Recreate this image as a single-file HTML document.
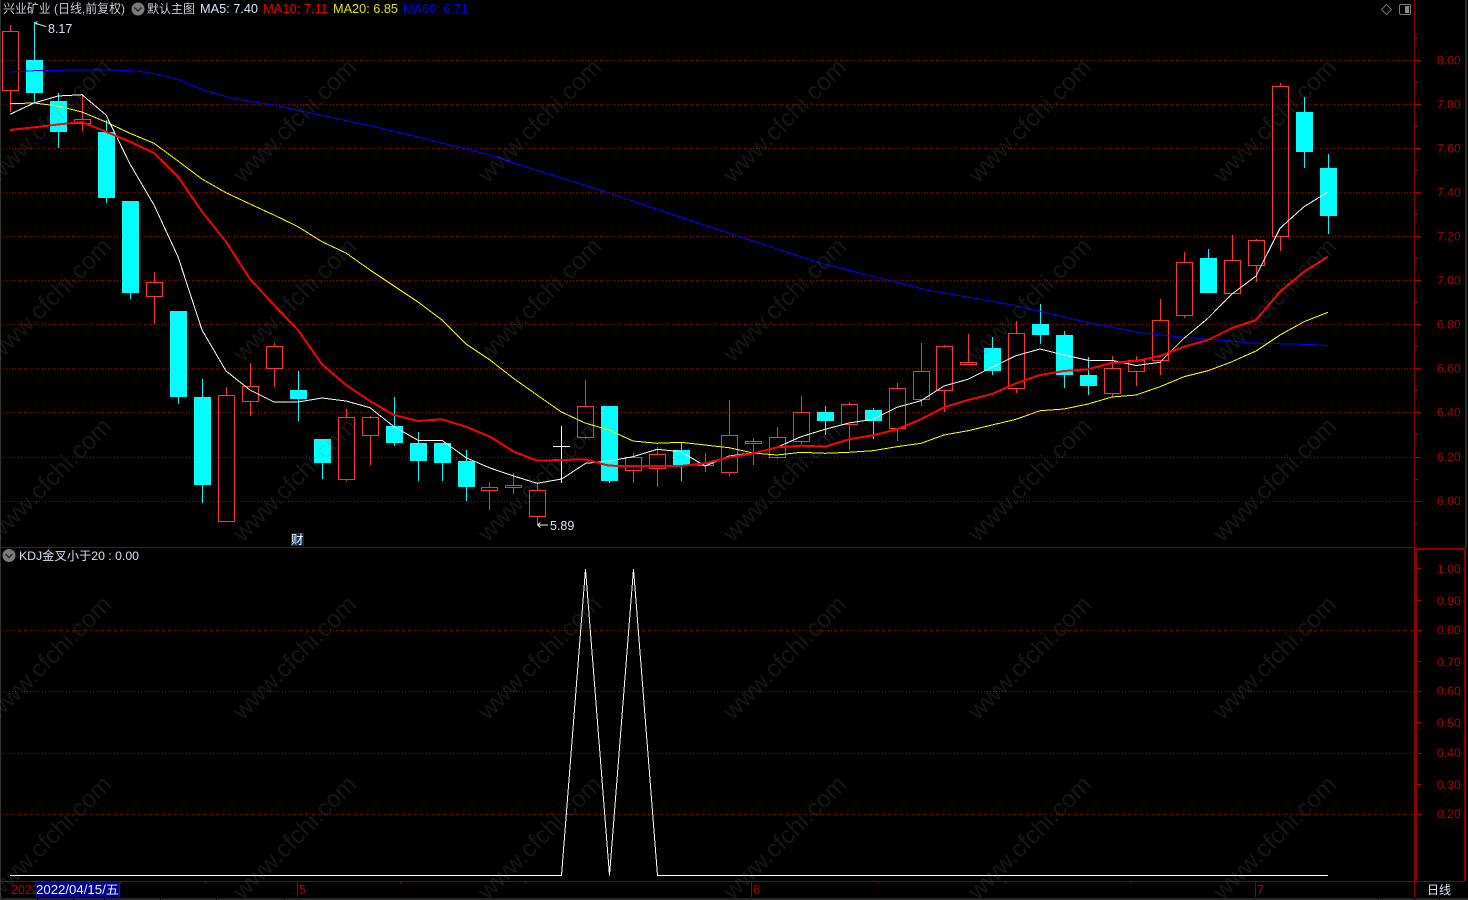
<!DOCTYPE html>
<html><head><meta charset="utf-8"><title>KDJ</title>
<style>
html,body{margin:0;padding:0;background:#000;width:1468px;height:900px;overflow:hidden}
svg{display:block;position:absolute;left:0;top:0}
text{font-family:"Liberation Sans","Noto Sans CJK SC",sans-serif}
.ax{fill:#a80000;font-size:12.2px}
.wm{fill:rgba(125,125,125,.17);font-size:24.6px;text-anchor:middle}
.g{stroke:#9a0000;stroke-width:1;stroke-dasharray:1 2;fill:none}
</style></head><body>
<svg width="1468" height="900" viewBox="0 0 1468 900" xmlns="http://www.w3.org/2000/svg">
<rect width="1468" height="900" fill="#000"/>

<!-- grid -->
<g shape-rendering="crispEdges">
<path class="g" d="M3 60.5H1414M3 104.5H1414M3 148.5H1414M3 192.5H1414M3 236.5H1414M3 280.5H1414M3 324.5H1414M3 368.5H1414M3 412.5H1414M3 457.5H1414M3 501.5H1414M3 630.5H1414M3 691.5H1414M3 753.5H1414M3 814.5H1414"/>
<!-- frames -->
<rect x="0" y="0" width="1" height="898" fill="#333"/>
<rect x="1465" y="0" width="2" height="548" fill="#2a2a2a"/>
<path d="M1 547.5H1415M1414.5 0V898M1 881.5H1465" stroke="#8c0000" fill="none"/>
<path d="M1416 549V881M1415 549H1466M1465 549V881" stroke="#8c0000" stroke-width="2" fill="none"/>
<path d="M297.5 882V897M751.5 882V897M1255.5 882V897M525.5 882V884M120.5 882V884M205.5 882V884M400.5 882V884M878.5 882V884M1005.5 882V884M1130.5 882V884" stroke="#8c0000" fill="none"/>
<!-- ticks -->
<path d="M1415 60.5h6M1415 104.5h6M1415 148.5h6M1415 192.5h6M1415 236.5h6M1415 280.5h6M1415 324.5h6M1415 368.5h6M1415 412.5h6M1415 457.5h6M1415 501.5h6M1415 82.5h3M1415 126.5h3M1415 170.5h3M1415 214.5h3M1415 258.5h3M1415 302.5h3M1415 346.5h3M1415 390.5h3M1415 434.5h3M1415 479.5h3M1415 523.5h3M1415 82.5h3M1415 38.5h3M1417 568.5h4M1417 600.5h4M1417 630.5h4M1417 661.5h4M1417 691.5h4M1417 722.5h4M1417 753.5h4M1417 784.5h4M1417 814.5h4" stroke="#a80000" fill="none"/>
<!-- bottom strip -->
<rect x="0" y="898" width="1468" height="2" fill="#262626"/>
<path d="M37.5 898v2M73.5 898v2M104.5 898v2M160.5 898v2M216.5 898v2M284.5 898v2M1378.5 898v2M1414.5 898v2M1439.5 898v2" stroke="#000"/>
</g>

<!-- red candles -->
<path shape-rendering="crispEdges" fill="none" stroke="#ff3333" stroke-width="1" d="
M10.5 25V31M10.5 91V112M2.5 31.5h16V90.5h-16z
M82.5 95V119M82.5 124V131M74.5 119.5h16V123.5h-16z
M154.5 272V282M154.5 297V324M146.5 282.5h16V296.5h-16z
M226.5 387V395M218.5 395.5h16V521.5h-16z
M250.5 363V386M250.5 402V416M242.5 386.5h16V401.5h-16z
M274.5 343V346M274.5 369V387M266.5 346.5h16V368.5h-16z
M346.5 409V417M346.5 480V481M338.5 417.5h16V479.5h-16z
M370.5 416V417M370.5 436V465M362.5 417.5h16V435.5h-16z
M489.5 482V487M489.5 491V510M481.5 487.5h16V490.5h-16z
M513.5 473V485M513.5 488V494M505.5 485.5h16V487.5h-16z
M537.5 483V490M537.5 517V525M529.5 490.5h16V516.5h-16z
M585.5 380V406M585.5 438V439M577.5 406.5h16V437.5h-16z
M633.5 453V457M633.5 471V483M625.5 457.5h16V470.5h-16z
M657.5 447V454M657.5 469V487M649.5 454.5h16V468.5h-16z
M705.5 453V463M705.5 466V472M697.5 463.5h16V465.5h-16z
M729.5 400V435M729.5 473V476M721.5 435.5h16V472.5h-16z
M753.5 438V441M753.5 444V465M745.5 441.5h16V443.5h-16z
M777.5 427V437M777.5 458V459M769.5 437.5h16V457.5h-16z
M801.5 396V412M801.5 442V444M793.5 412.5h16V441.5h-16z
M849.5 402V404M849.5 425V450M841.5 404.5h16V424.5h-16z
M897.5 383V388M897.5 429V441M889.5 388.5h16V428.5h-16z
M921.5 343V371M921.5 400V406M913.5 371.5h16V399.5h-16z
M944.5 345V346M944.5 391V412M936.5 346.5h16V390.5h-16z
M968.5 334V362M960.5 362.5h16V364.5h-16z
M1016.5 321V333M1016.5 389V393M1008.5 333.5h16V388.5h-16z
M1112.5 356V368M1112.5 394V397M1104.5 368.5h16V393.5h-16z
M1136.5 356V360M1136.5 372V386M1128.5 360.5h16V371.5h-16z
M1160.5 299V320M1160.5 361V375M1152.5 320.5h16V360.5h-16z
M1184.5 252V262M1184.5 316V318M1176.5 262.5h16V315.5h-16z
M1232.5 235V260M1224.5 260.5h16V293.5h-16z
M1256.5 239V240M1256.5 266V282M1248.5 240.5h16V265.5h-16z
M1280.5 83V86M1280.5 237V251M1272.5 86.5h16V236.5h-16z"/>

<!-- cyan candles -->
<path shape-rendering="crispEdges" fill="#00ffff" d="
M34 22h1v81h-1zM26 60h17v33h-17z
M58 93h1v55h-1zM50 101h17v31h-17z
M106 120h1v83h-1zM98 132h17v66h-17z
M130 201h1v98h-1zM122 201h17v92h-17z
M178 311h1v93h-1zM170 311h17v86h-17z
M202 379h1v124h-1zM194 397h17v88h-17z
M298 371h1v50h-1zM290 390h17v9h-17z
M322 439h1v40h-1zM314 439h17v24h-17z
M394 397h1v49h-1zM386 426h17v17h-17z
M418 432h1v49h-1zM410 443h17v18h-17z
M442 443h1v38h-1zM434 443h17v20h-17z
M466 450h1v51h-1zM458 461h17v26h-17z
M609 406h1v77h-1zM601 406h17v75h-17z
M681 443h1v38h-1zM673 450h17v16h-17z
M825 406h1v29h-1zM817 412h17v9h-17z
M873 408h1v31h-1zM865 410h17v11h-17z
M992 337h1v38h-1zM984 348h17v23h-17z
M1040 304h1v40h-1zM1032 324h17v11h-17z
M1064 331h1v57h-1zM1056 335h17v40h-17z
M1088 357h1v38h-1zM1080 375h17v11h-17z
M1208 249h1v44h-1zM1200 258h17v35h-17z
M1304 97h1v71h-1zM1296 112h17v40h-17z
M1328 154h1v80h-1zM1320 168h17v48h-17z"/>

<!-- doji -->
<path shape-rendering="crispEdges" d="M561.5 426V483M553 446.5H570" stroke="#fff" fill="none"/>

<g shape-rendering="crispEdges" fill="none">
<!-- MA60 -->
<polyline stroke="#0000ff" stroke-width="1" points="10,72 34,70.7 58,70.3 82,70 113,70 137,71 157,74 177,79 203,90 233,98.3 277,105.7 320,115 367,125 410,135 457,146.7 490,155 520,165 600,190 680,217 750,240 820,263 927,290 1013,305 1090,323 1140,332.7 1180,337 1220,340 1250,343 1310,344.5 1328,345.5"/>
<!-- MA20 -->
<polyline stroke="#ffff00" stroke-width="1" points="10,103.7 34,103 58,106 82,112 106,122 130,133.3 154,143.3 178,161 202,179 226,192.7 250,204 274,215 298,226.7 322,241.7 346,253 370,270 394,286 418,302 442,320 466,344 490,360 513,378 537,395 561,411.7 585,423 609,430 633,441 657,443.3 681,442.3 705,445 729,447.7 753,453 777,455 801,452.3 825,453.3 849,452.3 873,450.7 897,446.7 921,443.3 944,435 968,430.7 992,425 1016,419.3 1040,410.7 1064,409 1088,404 1112,397 1136,395 1160,386.7 1184,376.7 1208,370.7 1232,361.7 1256,351 1280,335 1304,321.7 1328,312.3"/>
<!-- MA5 -->
<polyline stroke="#ffffff" stroke-width="1" points="10,114.3 34,103 58,96 82,94.7 106,115 130,164 154,205 178,256.7 202,330 226,371 250,390 274,402 298,402 322,398 346,401 370,407.7 394,426.7 418,440.3 442,440.3 466,457.7 490,468 513.7,476 537,483.3 561.7,479 585.7,463.3 609.3,461 633,456.7 657.3,449.3 681,451.7 705,466 729,456 753.7,452.7 777,447.3 801,436.7 825,429.3 849,423 873,419.3 897,407.3 921,400.7 944,386 968,379.3 992,367.3 1016,355.7 1040,349 1064,355 1088,360.3 1112,360.3 1136,365.5 1160,362.3 1184,338.3 1208,318.3 1232,294 1256,276 1280,228.3 1304,206.7 1328,192"/>
<!-- MA10 -->
<polyline stroke="#ff0000" stroke-width="2" points="10,130 34,127.3 58,124.5 82,122 106,131.7 130,141.7 154,153 178,176.7 202,211.7 226,241.7 250,279 274,305 298,330 322,364.3 346,385 370,401 394,415 418,421 442,419.3 466,426.7 490,436.7 514,451.7 537,460.7 561,460 585,459.3 609,465.7 633,466 657,466 681,466 705,463.3 729,457.3 753.7,453.3 777,447.3 801,445.7 825,446.7 849,439.3 873,435.3 897,429.3 921,419.3 944,407.3 968,400 992,394 1016,383.3 1040,375 1064,371 1088,369.3 1112,362.7 1136,361 1160,356 1184,346.7 1208,340 1232,328 1256,320 1280,291.7 1304,271.7 1328,256.7"/>
<!-- KDJ -->
<polyline stroke="#ffffff" stroke-width="1" points="10,875.5 561.5,875.5 585.5,569 609.5,875.5 633.5,569 657.5,875.5 1328,875.5"/>
</g>

<!-- markers -->
<path d="M35 23L46 26.7M35 23l2.5-1.5M35 23l2.5 1.5" stroke="#e8e8e8" stroke-width="1" fill="none"/>
<text x="48" y="33" font-size="12.5" fill="#d4e4f0">8.17</text>
<path d="M537.5 525H548M537.5 525l3-2.5M537.5 525l3 2.5" stroke="#e8e8e8" stroke-width="1" fill="none"/>
<text x="550" y="530" font-size="12.5" fill="#d4e4f0">5.89</text>

<!-- 财 -->
<rect x="291" y="533" width="13" height="13" fill="#0a2c5a"/>
<text x="291" y="544" font-size="12.5" fill="#fff">财</text>

<!-- header -->
<text x="3" y="13" font-size="12.4" fill="#c4cdd6" textLength="122" lengthAdjust="spacingAndGlyphs">兴业矿业 (日线,前复权)</text>
<circle cx="138" cy="9" r="6.5" fill="#7a7a7a"/>
<path d="M134.5 7.5l3.500 3.500 3.500-3.500" stroke="#222" stroke-width="1.4" fill="none"/>
<text x="147" y="13" font-size="12" fill="#c4cdd6">默认主图</text>
<text x="200" y="13" font-size="12.6" fill="#d4e8fa" textLength="58" lengthAdjust="spacingAndGlyphs">MA5: 7.40</text>
<text x="263" y="13" font-size="12.6" fill="#e60000" textLength="65" lengthAdjust="spacingAndGlyphs">MA10: 7.11</text>
<text x="333" y="13" font-size="12.6" fill="#e6e600" textLength="65" lengthAdjust="spacingAndGlyphs">MA20: 6.85</text>
<text x="403" y="13" font-size="12.6" fill="#0000f0" textLength="65" lengthAdjust="spacingAndGlyphs">MA60: 6.71</text>
<path d="M1386.5 4.5l5 5-5 5-5-5z" fill="none" stroke="#6e6e6e"/>
<rect x="1399.5" y="4.5" width="11" height="10" rx="1.5" fill="none" stroke="#7a7a7a"/>
<rect x="1405" y="6" width="4" height="7" fill="#8a8a8a"/>

<!-- KDJ header -->
<circle cx="9" cy="555.5" r="6.5" fill="#7a7a7a"/>
<path d="M5.5 554l3.5 3.5 3.5-3.5" stroke="#222" stroke-width="1.4" fill="none"/>
<text x="19" y="560" font-size="12.2" fill="#d4e4f0" textLength="120" lengthAdjust="spacingAndGlyphs">KDJ金叉小于20 : 0.00</text>

<!-- axis labels -->
<g class="ax">
<text x="1437" y="64.5">8.00</text>
<text x="1437" y="108.5">7.80</text>
<text x="1437" y="152.5">7.60</text>
<text x="1437" y="196.5">7.40</text>
<text x="1437" y="240.5">7.20</text>
<text x="1437" y="284.5">7.00</text>
<text x="1437" y="328.5">6.80</text>
<text x="1437" y="372.5">6.60</text>
<text x="1437" y="416.5">6.40</text>
<text x="1437" y="461">6.20</text>
<text x="1437" y="505">6.00</text>
<text x="1437" y="573">1.00</text>
<text x="1437" y="605">0.90</text>
<text x="1437" y="634">0.80</text>
<text x="1437" y="666">0.70</text>
<text x="1437" y="695">0.60</text>
<text x="1437" y="727">0.50</text>
<text x="1437" y="757">0.40</text>
<text x="1437" y="789">0.30</text>
<text x="1437" y="818">0.20</text>
</g>

<!-- date bar -->
<text x="11" y="894" font-size="12.5" fill="#b00000">2022</text>
<rect x="35.5" y="882" width="84" height="15" fill="#000088"/>
<rect x="119" y="882" width="1" height="15" fill="#8c0000"/>
<text x="36" y="894" font-size="12.5" fill="#f0f4ff" textLength="83" lengthAdjust="spacingAndGlyphs">2022/04/15/五</text>
<text x="299" y="894" font-size="12.5" fill="#b00000">5</text>
<text x="753" y="894" font-size="12.5" fill="#b00000">6</text>
<text x="1257" y="894" font-size="12.5" fill="#b00000">7</text>
<text x="1427" y="894" font-size="12" fill="#dce8f4">日线</text>

<!-- watermark -->
<g class="wm" transform="translate(-3 2)">
<text transform="rotate(-45 52 118)" x="52" y="127">www.cfchi.com</text>
<text transform="rotate(-45 297 118)" x="297" y="127">www.cfchi.com</text>
<text transform="rotate(-45 542 118)" x="542" y="127">www.cfchi.com</text>
<text transform="rotate(-45 787 118)" x="787" y="127">www.cfchi.com</text>
<text transform="rotate(-45 1032 118)" x="1032" y="127">www.cfchi.com</text>
<text transform="rotate(-45 1277 118)" x="1277" y="127">www.cfchi.com</text>
<text transform="rotate(-45 52 297)" x="52" y="306">www.cfchi.com</text>
<text transform="rotate(-45 297 297)" x="297" y="306">www.cfchi.com</text>
<text transform="rotate(-45 542 297)" x="542" y="306">www.cfchi.com</text>
<text transform="rotate(-45 787 297)" x="787" y="306">www.cfchi.com</text>
<text transform="rotate(-45 1032 297)" x="1032" y="306">www.cfchi.com</text>
<text transform="rotate(-45 1277 297)" x="1277" y="306">www.cfchi.com</text>
<text transform="rotate(-45 52 477)" x="52" y="486">www.cfchi.com</text>
<text transform="rotate(-45 297 477)" x="297" y="486">www.cfchi.com</text>
<text transform="rotate(-45 542 477)" x="542" y="486">www.cfchi.com</text>
<text transform="rotate(-45 787 477)" x="787" y="486">www.cfchi.com</text>
<text transform="rotate(-45 1032 477)" x="1032" y="486">www.cfchi.com</text>
<text transform="rotate(-45 1277 477)" x="1277" y="486">www.cfchi.com</text>
<text transform="rotate(-45 52 655)" x="52" y="664">www.cfchi.com</text>
<text transform="rotate(-45 297 655)" x="297" y="664">www.cfchi.com</text>
<text transform="rotate(-45 542 655)" x="542" y="664">www.cfchi.com</text>
<text transform="rotate(-45 787 655)" x="787" y="664">www.cfchi.com</text>
<text transform="rotate(-45 1032 655)" x="1032" y="664">www.cfchi.com</text>
<text transform="rotate(-45 1277 655)" x="1277" y="664">www.cfchi.com</text>
<text transform="rotate(-45 52 835)" x="52" y="844">www.cfchi.com</text>
<text transform="rotate(-45 297 835)" x="297" y="844">www.cfchi.com</text>
<text transform="rotate(-45 542 835)" x="542" y="844">www.cfchi.com</text>
<text transform="rotate(-45 787 835)" x="787" y="844">www.cfchi.com</text>
<text transform="rotate(-45 1032 835)" x="1032" y="844">www.cfchi.com</text>
<text transform="rotate(-45 1277 835)" x="1277" y="844">www.cfchi.com</text>
</g>
</svg>
</body></html>
